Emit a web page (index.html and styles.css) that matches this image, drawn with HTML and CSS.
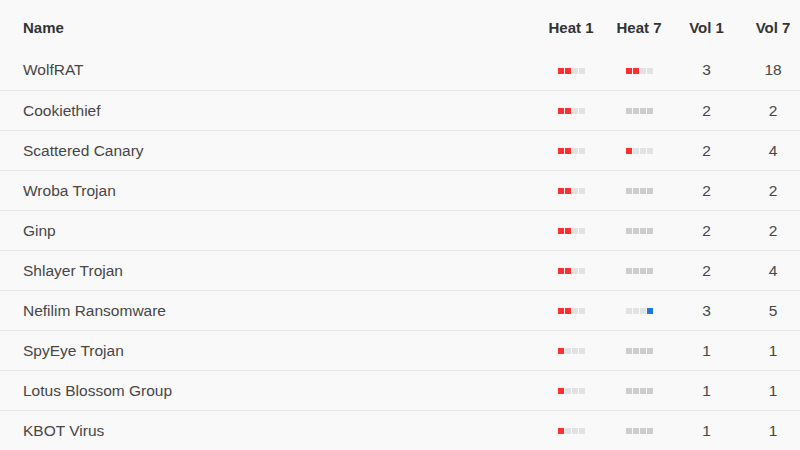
FILE: index.html
```html
<!DOCTYPE html>
<html>
<head>
<meta charset="utf-8">
<link rel="stylesheet" href="styles.css">
</head>
<body>
<div class="table">
  <div class="row head">
    <div class="name">Name</div>
    <div class="c">Heat 1</div>
    <div class="c">Heat 7</div>
    <div class="c">Vol 1</div>
    <div class="c">Vol 7</div>
  </div>

  <div class="row">
    <div class="name">WolfRAT</div>
    <div class="c"><span class="heat"><i class="r"></i><i class="r"></i><i></i><i></i></span></div>
    <div class="c"><span class="heat"><i class="r"></i><i class="r"></i><i></i><i></i></span></div>
    <div class="c">3</div>
    <div class="c">18</div>
  </div>
  <div class="row">
    <div class="name">Cookiethief</div>
    <div class="c"><span class="heat"><i class="r"></i><i class="r"></i><i></i><i></i></span></div>
    <div class="c"><span class="heat zero"><i></i><i></i><i></i><i></i></span></div>
    <div class="c">2</div>
    <div class="c">2</div>
  </div>
  <div class="row">
    <div class="name">Scattered Canary</div>
    <div class="c"><span class="heat"><i class="r"></i><i class="r"></i><i></i><i></i></span></div>
    <div class="c"><span class="heat"><i class="r"></i><i></i><i></i><i></i></span></div>
    <div class="c">2</div>
    <div class="c">4</div>
  </div>
  <div class="row">
    <div class="name">Wroba Trojan</div>
    <div class="c"><span class="heat"><i class="r"></i><i class="r"></i><i></i><i></i></span></div>
    <div class="c"><span class="heat zero"><i></i><i></i><i></i><i></i></span></div>
    <div class="c">2</div>
    <div class="c">2</div>
  </div>
  <div class="row">
    <div class="name">Ginp</div>
    <div class="c"><span class="heat"><i class="r"></i><i class="r"></i><i></i><i></i></span></div>
    <div class="c"><span class="heat zero"><i></i><i></i><i></i><i></i></span></div>
    <div class="c">2</div>
    <div class="c">2</div>
  </div>
  <div class="row">
    <div class="name">Shlayer Trojan</div>
    <div class="c"><span class="heat"><i class="r"></i><i class="r"></i><i></i><i></i></span></div>
    <div class="c"><span class="heat zero"><i></i><i></i><i></i><i></i></span></div>
    <div class="c">2</div>
    <div class="c">4</div>
  </div>
  <div class="row">
    <div class="name">Nefilim Ransomware</div>
    <div class="c"><span class="heat"><i class="r"></i><i class="r"></i><i></i><i></i></span></div>
    <div class="c"><span class="heat"><i></i><i></i><i></i><i class="b"></i></span></div>
    <div class="c">3</div>
    <div class="c">5</div>
  </div>
  <div class="row">
    <div class="name">SpyEye Trojan</div>
    <div class="c"><span class="heat"><i class="r"></i><i></i><i></i><i></i></span></div>
    <div class="c"><span class="heat zero"><i></i><i></i><i></i><i></i></span></div>
    <div class="c">1</div>
    <div class="c">1</div>
  </div>
  <div class="row">
    <div class="name">Lotus Blossom Group</div>
    <div class="c"><span class="heat"><i class="r"></i><i></i><i></i><i></i></span></div>
    <div class="c"><span class="heat zero"><i></i><i></i><i></i><i></i></span></div>
    <div class="c">1</div>
    <div class="c">1</div>
  </div>
  <div class="row">
    <div class="name">KBOT Virus</div>
    <div class="c"><span class="heat"><i class="r"></i><i></i><i></i><i></i></span></div>
    <div class="c"><span class="heat zero"><i></i><i></i><i></i><i></i></span></div>
    <div class="c">1</div>
    <div class="c">1</div>
  </div>
</div>
</body>
</html>
```
FILE: styles.css
```css
html, body {
  margin: 0;
  padding: 0;
  background: #f9f9f9;
  overflow: hidden;
}
body {
  width: 800px;
  height: 450px;
  font-family: "Liberation Sans", Arial, sans-serif;
  font-size: 15.5px;
  color: #464646;
}
.table {
  margin-right: -6px;
}
.row {
  box-sizing: border-box;
  display: grid;
  grid-template-columns: 1fr 68px 68px 67px 66px;
  align-items: center;
  height: 40px;
  padding-left: 23px;
  border-top: 1px solid #e6e6e6;
}
.row.head {
  height: 50px;
  padding-top: 4px;
  border-top: none;
  font-size: 15px;
  font-weight: bold;
  color: #333;
}
.row:nth-child(2) {
  border-top: none;
}
.c {
  text-align: center;
}
.heat {
  display: inline-flex;
  gap: 1px;
  vertical-align: middle;
}
.heat i {
  display: block;
  width: 6px;
  height: 6px;
  background: #e2e2e2;
}
.heat i.r {
  background: #fd2f2f;
}
.heat i.b {
  background: #1f78d8;
}
.heat.zero i {
  background: #cdcdcd;
}
```
